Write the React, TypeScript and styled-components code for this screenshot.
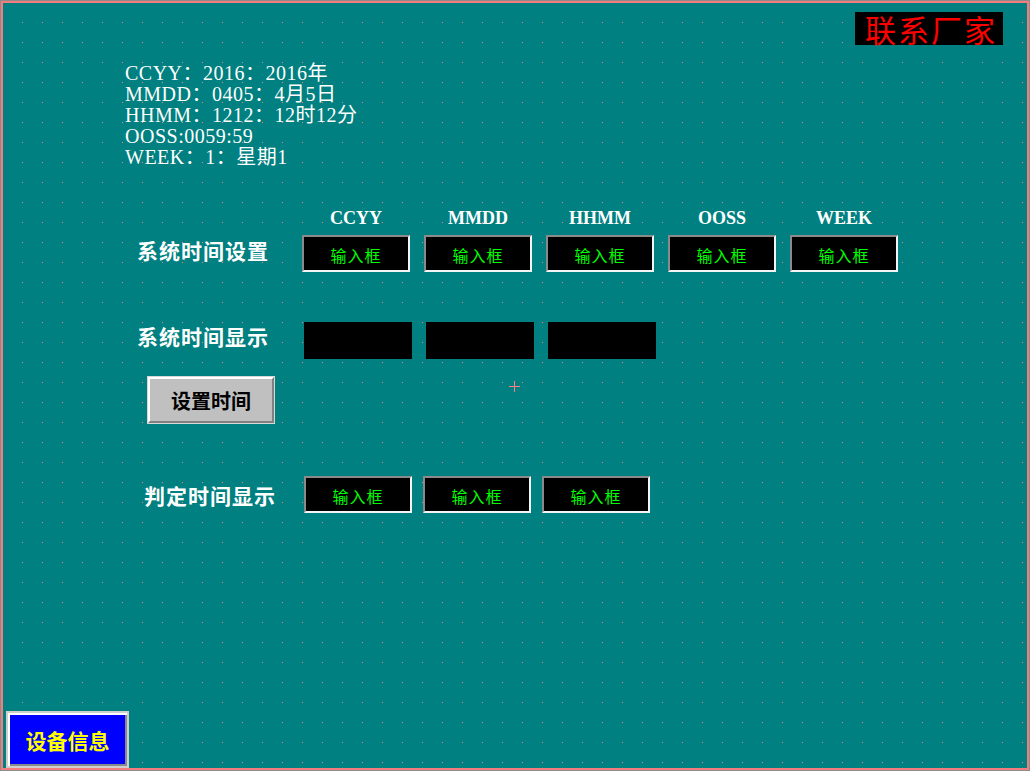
import styled, { createGlobalStyle } from 'styled-components'

const GlobalStyle = createGlobalStyle`
  html, body {
    margin: 0;
    padding: 0;
    background: #c0c0c0;
  }
  body {
    font-family: 'Liberation Serif', 'Noto Sans CJK SC', serif;
  }
`

const SET_HEADERS = ['CCYY', 'MMDD', 'HHMM', 'OOSS', 'WEEK']

const INFO_LINES = [
  'CCYY：2016：2016年',
  'MMDD：0405：4月5日',
  'HHMM：1212：12时12分',
  'OOSS:0059:59',
  'WEEK：1：星期1'
]

export default function App () {
  return (
    <>
      <GlobalStyle />
      <Frame>
        <Canvas>
          <TopBar>
            <VendorTag>联系厂家</VendorTag>
          </TopBar>

          <InfoBlock>
            {INFO_LINES.map(line => <InfoLine key={line}>{line}</InfoLine>)}
          </InfoBlock>

          <HeaderRow $left={302} $gap={14}>
            {SET_HEADERS.map(h => <ColumnHead key={h}>{h}</ColumnHead>)}
          </HeaderRow>

          <FieldRow $labelLeft={137} $boxLeft={302} $top={7}>
            <RowLabel $shift={-4}>系统时间设置</RowLabel>
            <BoxGroup $gap={14}>
              {SET_HEADERS.map(h => <InputBox key={h}>输入框</InputBox>)}
            </BoxGroup>
          </FieldRow>

          <FieldRow $labelLeft={137} $boxLeft={304} $top={50}>
            <RowLabel $shift={-5}>系统时间显示</RowLabel>
            <BoxGroup $gap={14}>
              <DisplayBox />
              <DisplayBox />
              <DisplayBox />
            </BoxGroup>
          </FieldRow>

          <ButtonRow>
            <SetButton>设置时间</SetButton>
            <CrossMark width='11' height='11' viewBox='0 0 11 11'>
              <path d='M5.5 0V11M0 5.5H11' stroke='#ff8080' strokeWidth='1' />
            </CrossMark>
          </ButtonRow>

          <FieldRow $labelLeft={144} $boxLeft={304} $top={53}>
            <RowLabel $shift={0}>判定时间显示</RowLabel>
            <BoxGroup $gap={11}>
              <InputBox>输入框</InputBox>
              <InputBox>输入框</InputBox>
              <InputBox>输入框</InputBox>
            </BoxGroup>
          </FieldRow>

          <DeviceButton>设备信息</DeviceButton>
        </Canvas>
      </Frame>
    </>
  )
}

const Frame = styled.div`
  width: 1030px;
  height: 771px;
  box-sizing: border-box;
  border: 1px solid #8c8c8c;
`

// 3px total edge: 1px grey + 2px salmon, canvas padding box starts at 3,3
const Canvas = styled.div`
  height: 100%;
  box-sizing: border-box;
  border: 2px solid #f47c7c;
  display: flex;
  flex-direction: column;
  background:
    conic-gradient(at 1px 1px, transparent 75%, #ff7f7f 0) 19px 19px / 20px 20px repeat,
    #008080;
`

const TopBar = styled.div`
  display: flex;
  justify-content: flex-end;
  padding: 9px 24px 0 0;
`

const VendorTag = styled.div`
  width: 148px;
  height: 33px;
  background: #000;
  color: #ff0000;
  font-family: 'Noto Sans CJK SC', sans-serif;
  font-size: 31px;
  line-height: 33px;
  letter-spacing: 2px;
  text-align: center;
  text-indent: 4px;
`

const InfoBlock = styled.div`
  margin-top: 18px;
  padding-left: 122px;
  color: #fff;
  font-size: 20px;
  line-height: 21px;
  letter-spacing: 0.5px;
`

const InfoLine = styled.div`
  white-space: nowrap;
`

const HeaderRow = styled.div<{ $left: number, $gap: number }>`
  display: flex;
  gap: ${p => p.$gap}px;
  margin-top: 40px;
  padding-left: ${p => p.$left - 3}px;
`

const ColumnHead = styled.div`
  width: 108px;
  text-align: center;
  color: #fff;
  font-size: 18px;
  font-weight: bold;
  line-height: 20px;
`

const FieldRow = styled.div<{ $labelLeft: number, $boxLeft: number, $top: number }>`
  display: flex;
  align-items: center;
  margin-top: ${p => p.$top}px;
  padding-left: ${p => p.$labelLeft - 3}px;

  & > :first-child {
    width: ${p => p.$boxLeft - p.$labelLeft}px;
  }
`

const RowLabel = styled.div<{ $shift: number }>`
  color: #fff;
  font-family: 'Noto Sans CJK SC', sans-serif;
  font-size: 21px;
  font-weight: bold;
  letter-spacing: 1px;
  white-space: nowrap;
  margin-top: ${p => p.$shift * 2}px;
`

const BoxGroup = styled.div<{ $gap: number }>`
  display: flex;
  gap: ${p => p.$gap}px;
`

const InputBox = styled.div`
  width: 108px;
  height: 37px;
  box-sizing: border-box;
  background: #000;
  border: 2px solid;
  border-color: #8a8a8a #f4f4f4 #f4f4f4 #8a8a8a;
  color: #00ff00;
  font-family: 'Noto Sans CJK SC', sans-serif;
  font-size: 16px;
  letter-spacing: 1px;
  display: flex;
  align-items: center;
  justify-content: center;
  padding-top: 2px;
`

const DisplayBox = styled.div`
  width: 108px;
  height: 37px;
  background: #000;
`

const ButtonRow = styled.div`
  position: relative;
  margin-top: 18px;
  padding-left: 145px;
`

const SetButton = styled.div`
  width: 126px;
  height: 46px;
  box-sizing: border-box;
  background: #c0c0c0;
  border: 2px solid;
  border-color: #ffffff #808080 #808080 #ffffff;
  box-shadow: 0 0 0 1px #d8d8d8;
  color: #000;
  font-family: 'Noto Sans CJK SC', sans-serif;
  font-size: 20px;
  font-weight: bold;
  display: flex;
  align-items: center;
  justify-content: center;
`

const CrossMark = styled.svg`
  position: absolute;
  left: 506px;
  top: 4px;
`

const DeviceButton = styled.div`
  margin: auto 0 0 3px;
  width: 123px;
  height: 57px;
  box-sizing: border-box;
  background: #0000ff;
  border: 2px solid #cfcfcf;
  box-shadow: inset 2px 2px 0 #ffffff, inset -2px -2px 0 #8a8a8a;
  color: #ffff00;
  font-family: 'Noto Sans CJK SC', sans-serif;
  font-size: 21px;
  font-weight: bold;
  display: flex;
  align-items: center;
  justify-content: center;
`
